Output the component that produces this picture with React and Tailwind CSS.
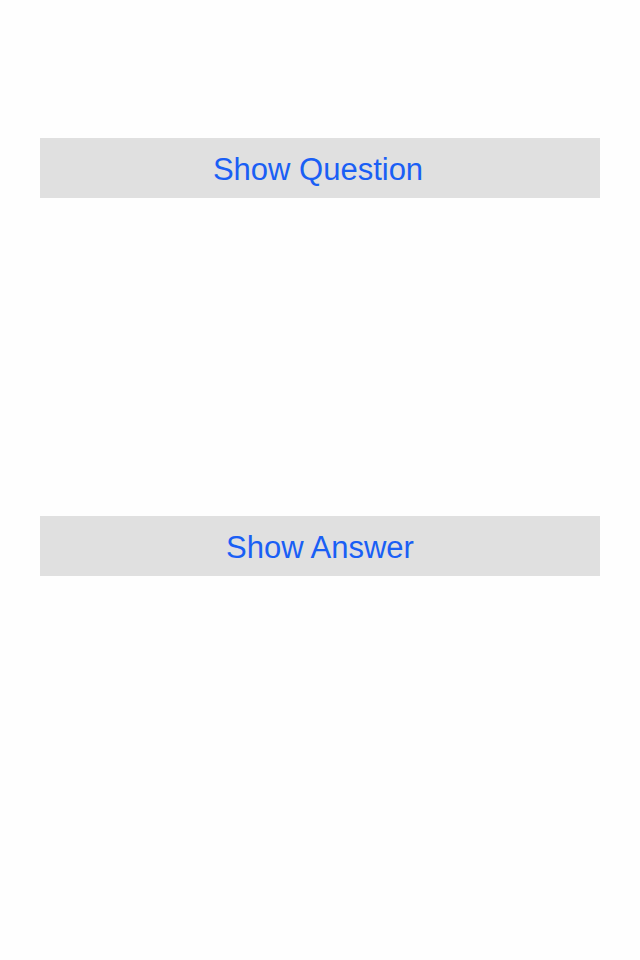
import React from "react";

const App = () => {
  return (
    <div className="w-[640px] h-[960px] bg-[#fefefe] px-10 pt-[138px] font-['Liberation_Sans',Arial,sans-serif]">
      <button className="w-full h-[60px] bg-[#e0e0e0] text-[#1a5ff5] text-[31px] leading-none pt-[2px] pr-[4px]">
        Show Question
      </button>
      <div className="h-[318px]" />
      <button className="w-full h-[60px] bg-[#e0e0e0] text-[#1a5ff5] text-[31px] leading-none pt-[2px]">
        Show Answer
      </button>
    </div>
  );
};

export default App;
